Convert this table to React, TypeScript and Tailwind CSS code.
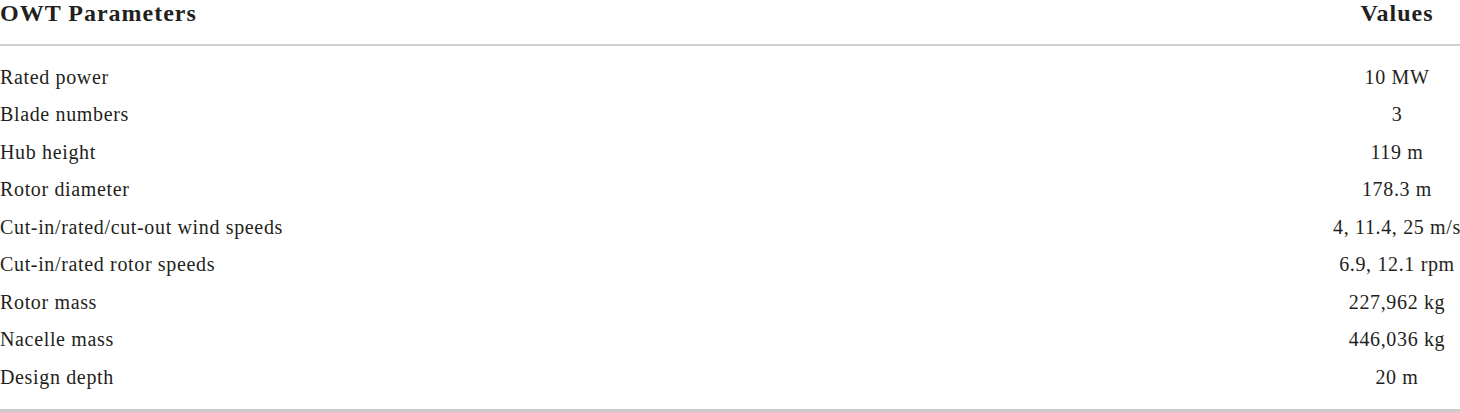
const ROWS: [string, string][] = [
  ["Rated power", "10 MW"],
  ["Blade numbers", "3"],
  ["Hub height", "119 m"],
  ["Rotor diameter", "178.3 m"],
  ["Cut-in/rated/cut-out wind speeds", "4, 11.4, 25 m/s"],
  ["Cut-in/rated rotor speeds", "6.9, 12.1 rpm"],
  ["Rotor mass", "227,962 kg"],
  ["Nacelle mass", "446,036 kg"],
  ["Design depth", "20 m"],
];

export default function App() {
  return (
    <div className="w-[1460px] h-[412px] overflow-hidden bg-white text-[#231f20] font-['Liberation_Serif',serif]">
      <div className="grid grid-cols-[1fr_126px] border-b-2 border-[#d0d0d0] pb-[17px]">
        <div className="text-[24px] font-bold leading-[27px] tracking-[1px] whitespace-nowrap">
          OWT Parameters
        </div>
        <div className="flex justify-center text-[24px] font-bold leading-[27px] tracking-[1px] whitespace-nowrap">
          Values
        </div>
      </div>
      <div className="border-b-[3px] border-[#cccccc] py-[12.5px]">
        {ROWS.map(([label, value]) => (
          <div
            key={label}
            className="grid h-[37.5px] grid-cols-[1fr_126px] text-[20px] leading-[37.5px] tracking-[0.65px]"
          >
            <div className="whitespace-nowrap">{label}</div>
            <div className="flex justify-center whitespace-nowrap">{value}</div>
          </div>
        ))}
      </div>
    </div>
  );
}
